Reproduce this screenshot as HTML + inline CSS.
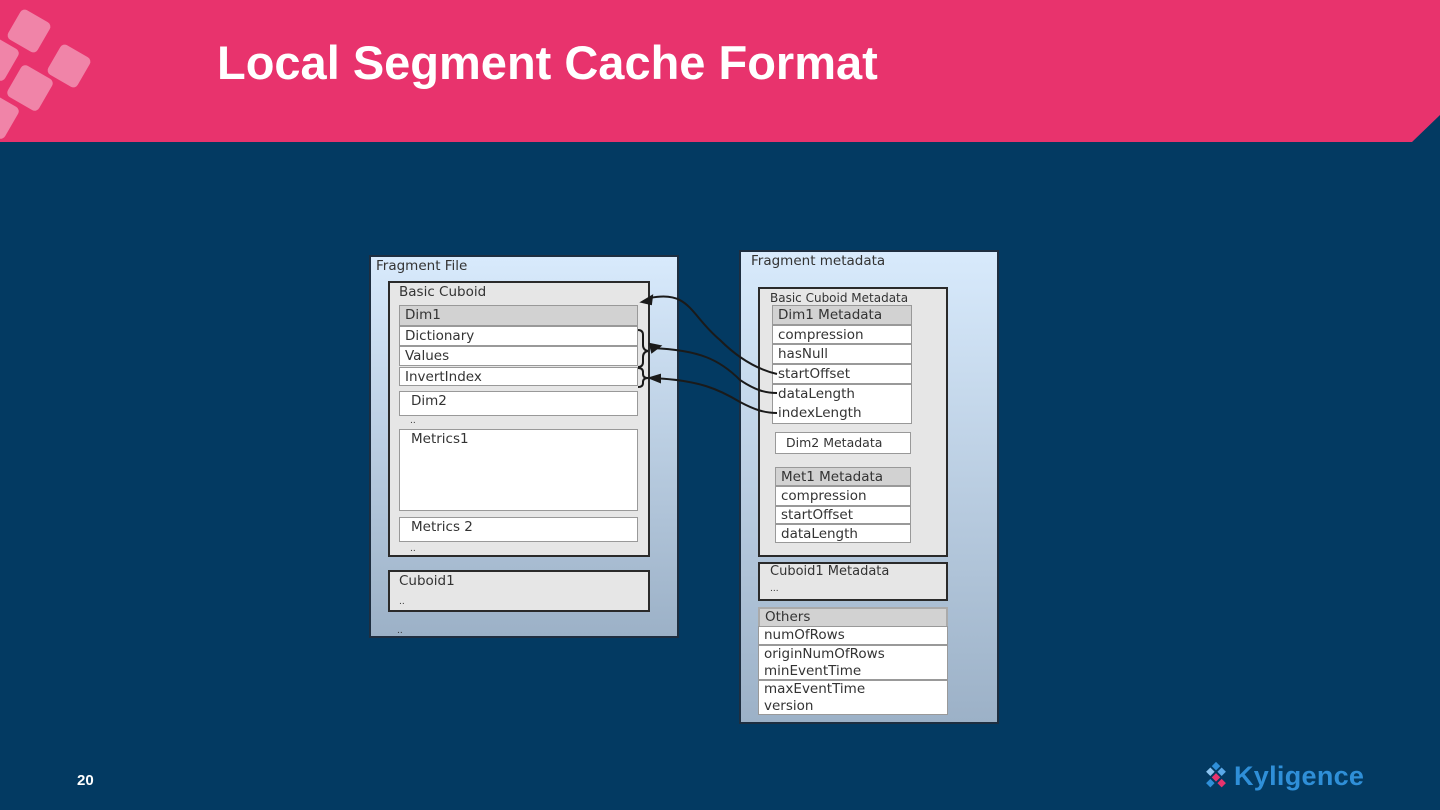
<!DOCTYPE html>
<html><head><style>
*{margin:0;padding:0;box-sizing:border-box}
body{width:1440px;height:810px;background:#033a62;position:relative;overflow:hidden;font-family:"DejaVu Sans","Liberation Sans",sans-serif}
.hdr{position:absolute;left:0;top:0;width:1440px;height:142px;background:#e8336d;clip-path:polygon(0 0,1440px 0,1440px 115px,1412px 142px,0 142px)}
h1{position:absolute;left:217px;top:35px;font:bold 47px "Liberation Sans",sans-serif;color:#fff}
.sq{position:absolute;background:#f084a8;border-radius:5px;transform:rotate(30deg)}
.b{position:absolute;font-size:13.5px;color:#333;line-height:19px;padding-left:5px;white-space:nowrap}
.g{background:linear-gradient(#d8eafc,#9cb1c7)}
.w{background:#fff;border:1px solid #999}
.l{background:#e6e6e6}
.h{background:#d2d2d2}
.d{border:2px solid #2a2a2a}
.n{position:absolute;left:77px;top:772px;color:#fff;font:bold 15px "Liberation Sans",sans-serif}
.logo{position:absolute;left:1234px;top:761px;color:#2f8fd8;font:bold 27px "Liberation Sans",sans-serif;letter-spacing:0.3px}
</style></head><body>
<div class="hdr"></div>
<div class="sq" style="left:12px;top:14px;width:34px;height:34px"></div>
<div class="sq" style="left:-22px;top:40px;width:36px;height:36px"></div>
<div class="sq" style="left:52px;top:49px;width:34px;height:34px"></div>
<div class="sq" style="left:12px;top:70px;width:36px;height:36px"></div>
<div class="sq" style="left:-22px;top:98px;width:36px;height:36px"></div>
<h1>Local Segment Cache Format</h1>

<div class="b g" style="left:369px;top:255px;width:310px;height:383px;border:2px solid #1e2e40">Fragment File</div>
<div class="b l d" style="left:388px;top:281px;width:262px;height:276px;padding-left:9px">Basic Cuboid</div>
<div class="b h" style="left:399px;top:305px;width:239px;height:21px;border:1px solid #999">Dim1</div>
<div class="b w" style="left:399px;top:326px;width:239px;height:20px">Dictionary</div>
<div class="b w" style="left:399px;top:346px;width:239px;height:20px">Values</div>
<div class="b w" style="left:399px;top:367px;width:239px;height:19px">InvertIndex</div>
<div class="b w" style="left:399px;top:391px;width:239px;height:25px;padding-left:11px">Dim2</div>
<div class="b" style="left:405px;top:412px;font-size:9px">..</div>
<div class="b w" style="left:399px;top:429px;width:239px;height:82px;padding-left:11px">Metrics1</div>
<div class="b w" style="left:399px;top:517px;width:239px;height:25px;padding-left:11px">Metrics 2</div>
<div class="b" style="left:405px;top:540px;font-size:9px">..</div>
<div class="b l d" style="left:388px;top:570px;width:262px;height:42px;padding-left:9px">Cuboid1<br><span style="font-size:9px">..</span></div>
<div class="b" style="left:392px;top:622px;font-size:9px">..</div>

<div class="b g" style="left:739px;top:250px;width:260px;height:474px;border:2px solid #1e2e40;padding-left:10px">Fragment metadata</div>
<div class="b l d" style="left:758px;top:287px;width:190px;height:270px;font-size:12px;padding-left:10px">Basic Cuboid Metadata</div>
<div class="b h" style="left:772px;top:305px;width:140px;height:20px;border:1px solid #999">Dim1 Metadata</div>
<div class="b w" style="left:772px;top:325px;width:140px;height:19px">compression</div>
<div class="b w" style="left:772px;top:344px;width:140px;height:20px">hasNull</div>
<div class="b w" style="left:772px;top:364px;width:140px;height:20px">startOffset</div>
<div class="b w" style="left:772px;top:384px;width:140px;height:40px">dataLength<br>indexLength</div>
<div class="b w" style="left:775px;top:432px;width:136px;height:22px;padding-left:10px;font-size:12.5px">Dim2 Metadata</div>
<div class="b h" style="left:775px;top:467px;width:136px;height:19px;border:1px solid #999">Met1 Metadata</div>
<div class="b w" style="left:775px;top:486px;width:136px;height:20px">compression</div>
<div class="b w" style="left:775px;top:506px;width:136px;height:18px;line-height:16px">startOffset</div>
<div class="b w" style="left:775px;top:524px;width:136px;height:19px;line-height:18px">dataLength</div>
<div class="b l d" style="left:758px;top:562px;width:190px;height:39px;padding-left:10px;font-size:13px;line-height:16px">Cuboid1 Metadata<br><span style="font-size:9px">...</span></div>
<div class="b h" style="left:758px;top:607px;width:190px;height:19px;border:2px solid #aaa;border-bottom:0;line-height:17px">Others</div>
<div class="b w" style="left:758px;top:626px;width:190px;height:19px;line-height:17px">numOfRows</div>
<div class="b w" style="left:758px;top:645px;width:190px;height:35px;line-height:17px">originNumOfRows<br>minEventTime</div>
<div class="b w" style="left:758px;top:680px;width:190px;height:35px;line-height:17px">maxEventTime<br>version</div>

<svg style="position:absolute;left:0;top:0" width="1440" height="810" fill="none" stroke="#1a1a1a" stroke-width="2">
<path d="M638 330 q5 0 5 5 v10 q0 5 5 6 q-5 1 -5 6 v5 q0 5 -5 5"/>
<path d="M638 368 q5 0 5 4 v2 q0 4 5 4 q-5 0 -5 4 v1 q0 4 -5 4"/>
<path d="M650 298 C690 290,690 315,720 340 C740 360,760 370,777 374"/>
<path d="M652 348 C700 350,720 360,740 380 C755 390,765 393,777 393"/>
<path d="M652 378 C700 380,720 390,740 402 C755 410,765 413,777 413"/>
<path d="M642 302 l10 -6 l-1 8z M650 344 l10 2 l-8 6z M650 378 l10 -3 l0 7z" fill="#1a1a1a"/>
</svg>

<div class="n">20</div>
<svg style="position:absolute;left:1198px;top:762px" width="36" height="28">
<g transform="rotate(45 18 14)">
<rect x="8" y="4" width="6" height="6" fill="#2f8fd8"/><rect x="16" y="4" width="6" height="6" fill="#5aa8e8"/>
<rect x="8" y="12" width="6" height="6" fill="#8cc4f0"/><rect x="16" y="12" width="6" height="6" fill="#e8336d"/>
<rect x="24" y="12" width="6" height="6" fill="#e8336d"/><rect x="16" y="20" width="6" height="6" fill="#2f8fd8"/>
</g></svg>
<div class="logo">Kyligence</div>
</body></html>
